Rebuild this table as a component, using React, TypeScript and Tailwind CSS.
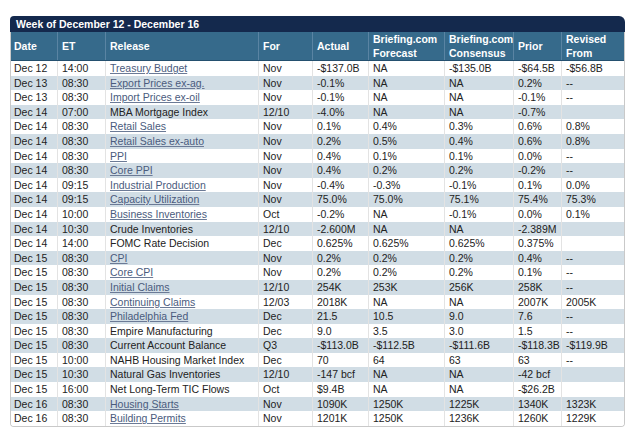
import React from "react";

type Row = [string, string, string, boolean, string, string, string, string, string, string];

const rows: Row[] = [
  ["Dec 12", "14:00", "Treasury Budget", true, "Nov", "-$137.0B", "NA", "-$135.0B", "-$64.5B", "-$56.8B"],
  ["Dec 13", "08:30", "Export Prices ex-ag.", true, "Nov", "-0.1%", "NA", "NA", "0.2%", "--"],
  ["Dec 13", "08:30", "Import Prices ex-oil", true, "Nov", "-0.1%", "NA", "NA", "-0.1%", "--"],
  ["Dec 14", "07:00", "MBA Mortgage Index", false, "12/10", "-4.0%", "NA", "NA", "-0.7%", ""],
  ["Dec 14", "08:30", "Retail Sales", true, "Nov", "0.1%", "0.4%", "0.3%", "0.6%", "0.8%"],
  ["Dec 14", "08:30", "Retail Sales ex-auto", true, "Nov", "0.2%", "0.5%", "0.4%", "0.6%", "0.8%"],
  ["Dec 14", "08:30", "PPI", true, "Nov", "0.4%", "0.1%", "0.1%", "0.0%", "--"],
  ["Dec 14", "08:30", "Core PPI", true, "Nov", "0.4%", "0.2%", "0.2%", "-0.2%", "--"],
  ["Dec 14", "09:15", "Industrial Production", true, "Nov", "-0.4%", "-0.3%", "-0.1%", "0.1%", "0.0%"],
  ["Dec 14", "09:15", "Capacity Utilization", true, "Nov", "75.0%", "75.0%", "75.1%", "75.4%", "75.3%"],
  ["Dec 14", "10:00", "Business Inventories", true, "Oct", "-0.2%", "NA", "-0.1%", "0.0%", "0.1%"],
  ["Dec 14", "10:30", "Crude Inventories", false, "12/10", "-2.600M", "NA", "NA", "-2.389M", ""],
  ["Dec 14", "14:00", "FOMC Rate Decision", false, "Dec", "0.625%", "0.625%", "0.625%", "0.375%", ""],
  ["Dec 15", "08:30", "CPI", true, "Nov", "0.2%", "0.2%", "0.2%", "0.4%", "--"],
  ["Dec 15", "08:30", "Core CPI", true, "Nov", "0.2%", "0.2%", "0.2%", "0.1%", "--"],
  ["Dec 15", "08:30", "Initial Claims", true, "12/10", "254K", "253K", "256K", "258K", "--"],
  ["Dec 15", "08:30", "Continuing Claims", true, "12/03", "2018K", "NA", "NA", "2007K", "2005K"],
  ["Dec 15", "08:30", "Philadelphia Fed", true, "Dec", "21.5", "10.5", "9.0", "7.6", "--"],
  ["Dec 15", "08:30", "Empire Manufacturing", false, "Dec", "9.0", "3.5", "3.0", "1.5", "--"],
  ["Dec 15", "08:30", "Current Account Balance", false, "Q3", "-$113.0B", "-$112.5B", "-$111.6B", "-$118.3B", "-$119.9B"],
  ["Dec 15", "10:00", "NAHB Housing Market Index", false, "Dec", "70", "64", "63", "63", "--"],
  ["Dec 15", "10:30", "Natural Gas Inventories", false, "12/10", "-147 bcf", "NA", "NA", "-42 bcf", ""],
  ["Dec 15", "16:00", "Net Long-Term TIC Flows", false, "Oct", "$9.4B", "NA", "NA", "-$26.2B", ""],
  ["Dec 16", "08:30", "Housing Starts", true, "Nov", "1090K", "1250K", "1225K", "1340K", "1323K"],
  ["Dec 16", "08:30", "Building Permits", true, "Nov", "1201K", "1250K", "1236K", "1260K", "1229K"],
];

const grid = "grid grid-cols-[46px_48px_153px_54px_56px_76px_69px_48px_63px]";

export default function App() {
  return (
    <div
      className="w-[640px] h-[444px] bg-white pt-[16px] pl-[10px] text-[10.5px]"
      style={{ fontFamily: '"Liberation Sans", Arial, sans-serif' }}
    >
      <div className="w-[615px]">
        <div className="h-[16px] bg-[#14294d] rounded-tl-[4px] rounded-tr-[6px] pl-[6px] font-bold text-white leading-[16px]">
          Week of December 12 - December 16
        </div>
        <div className="border-x border-b border-[#c9c9c9] rounded-b-[4px] overflow-hidden">
          <div className={`${grid} h-[29px] bg-[#366a8b] border-b border-[#24506f] text-white font-bold leading-[14px]`}>
            {["Date", "ET", "Release", "For", "Actual", "Briefing.com Forecast", "Briefing.com Consensus", "Prior", "Revised From"].map(
              (h, i) => (
                <div
                  key={i}
                  className={`flex items-center ${i === 0 ? "pl-[3px]" : "pl-[4px] border-l border-[#5a84a3]"}`}
                >
                  {h.startsWith("Briefing") ? (
                    <span>
                      Briefing.com
                      <br />
                      {h.split(" ")[1]}
                    </span>
                  ) : h === "Revised From" ? (
                    <span>
                      Revised
                      <br />
                      From
                    </span>
                  ) : (
                    h
                  )}
                </div>
              )
            )}
          </div>
          {rows.map((r, ri) => {
            const cells = [r[0], r[1], r[2], r[4], r[5], r[6], r[7], r[8], r[9]];
            return (
              <div
                key={ri}
                className={`${grid} h-[14.6px] leading-[14.6px] text-[#222] ${ri % 2 === 1 ? "bg-[#d1dde5]" : "bg-white"}`}
              >
                {cells.map((c, ci) => (
                  <div
                    key={ci}
                    className={`whitespace-nowrap overflow-hidden ${ci === 0 ? "pl-[3px]" : "pl-[4px] border-l border-[#e3e3e3]"}`}
                  >
                    {ci === 2 && r[3] ? (
                      <span className="text-[#4a5b7d] underline decoration-[#6b7a96]">{c}</span>
                    ) : (
                      c
                    )}
                  </div>
                ))}
              </div>
            );
          })}
        </div>
      </div>
    </div>
  );
}
